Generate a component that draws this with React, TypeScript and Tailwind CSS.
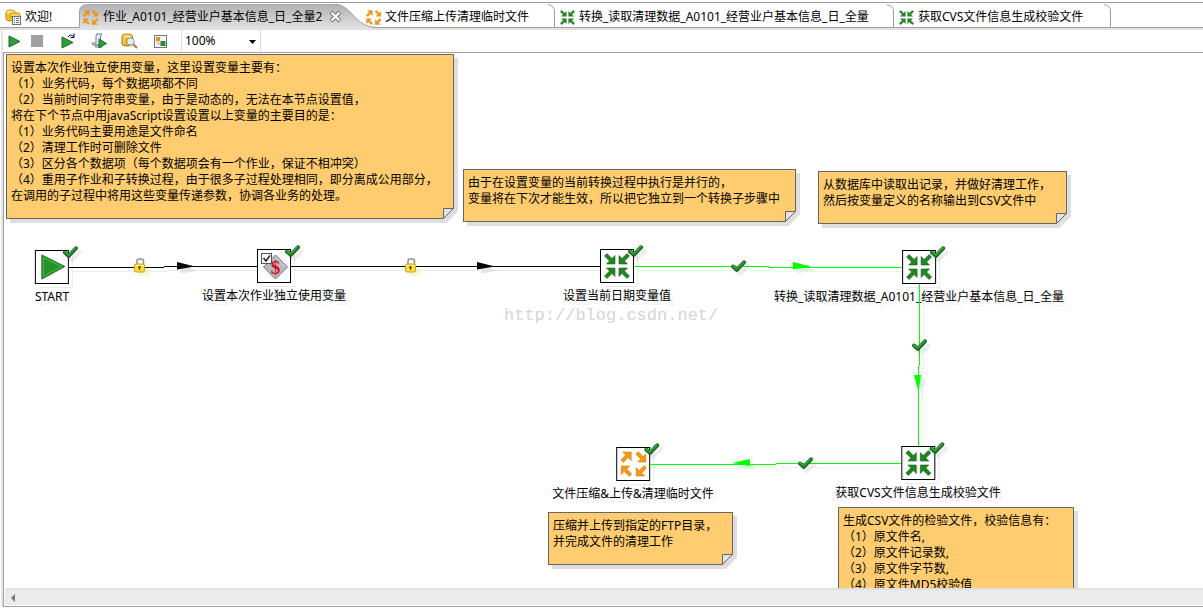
import React from 'react';

const ARROW = '0.5,3 3,0.5 8,5.5 11,2.5 11,11 2.5,11 5.5,8';

function TransformIcon({ className }: { className: string }) {
  return (
    <svg viewBox="0 0 26 26" className={className} fill="#238423" stroke="#176617" strokeWidth="0.6" aria-hidden="true">
      <polygon points={ARROW} />
      <polygon points={ARROW} transform="translate(26 0) scale(-1 1)" />
      <polygon points={ARROW} transform="translate(0 26) scale(1 -1)" />
      <polygon points={ARROW} transform="translate(26 26) scale(-1 -1)" />
    </svg>
  );
}

function JobIcon({ className }: { className: string }) {
  return (
    <svg viewBox="0 0 26 26" className={className} fill="#f29a17" stroke="#cf7d10" strokeWidth="0.6" aria-hidden="true">
      <polygon points={ARROW} transform="translate(0 0) rotate(-90 6 6)" />
      <polygon points={ARROW} transform="translate(15 0)" />
      <polygon points={ARROW} transform="translate(15 14) rotate(90 6 6)" />
      <polygon points={ARROW} transform="translate(0 14) rotate(180 6 6)" />
    </svg>
  );
}

function CheckShape() {
  return (
    <>
      <path d="M4 10 L8.500 14 L18 5.500" fill="none" stroke="#000" strokeOpacity="0.07" strokeWidth="4" />
      <path d="M2 6.500 L5.800 9.800 L13 2.300" fill="none" stroke="#165c1f" strokeWidth="4" strokeLinecap="round" strokeLinejoin="round" />
      <path d="M2 6.200 L5.800 9.200 L13 2" fill="none" stroke="#258a30" strokeWidth="2.600" strokeLinecap="round" strokeLinejoin="round" />
      <path d="M1.800 5.500 L5.600 8.300 L12.800 1.300" fill="none" stroke="#5cb462" strokeWidth="0.8" />
    </>
  );
}

function LockShape() {
  return (
    <>
      <path d="M3 7 V3 Q3 1 5 1 H7.500 Q9.500 1 9.500 3 V7" fill="none" stroke="#8f8f8f" strokeWidth="1.500" />
      <rect x="4" y="10" width="12" height="8" rx="1.500" fill="#f7ecb0" opacity="0.45" />
      <rect x="0.500" y="6" width="10" height="8" rx="1.500" fill="#f9dc35" stroke="#c9a21c" />
      <path d="M2 7.500 H10" stroke="#fff3a0" />
      <circle cx="5.500" cy="9.200" r="1.200" fill="#5a4708" />
      <path d="M5.500 9.500 V12" stroke="#5a4708" />
    </>
  );
}

function StartIcon() {
  return (
    <svg viewBox="0 0 32 32" className="size-8" aria-hidden="true">
      <path d="M6 4 L29 15.500 L6 28 Z" fill="#259425" stroke="#16701b" />
      <path d="M7.500 6.500 L26 15.500 L7.500 25.500 Z" fill="none" stroke="#63bb5e" strokeWidth="0.8" />
    </svg>
  );
}

function VariablesIcon() {
  return (
    <svg viewBox="0 0 32 32" className="size-8" aria-hidden="true">
      <path d="M17.500 5 L29.500 17 L17.500 29 L5.500 17 Z" fill="#b9babd" stroke="#6d6e70" />
      <path d="M17.500 7 L27.500 17" stroke="#dedfe0" />
      <text x="17.500" y="23.500" textAnchor="middle" fontFamily="Liberation Serif, serif" fontWeight="700" fontSize="19" fill="#cf1020">$</text>
      <rect x="3.500" y="3.500" width="10" height="10" fill="#f6f6f6" stroke="#555" />
      <path d="M5.500 8 L8 11 L12 5.500" fill="none" stroke="#222" strokeWidth="1.500" />
    </svg>
  );
}

function Node({ place, label, children }: { place: string; label: string; children: React.ReactNode }) {
  return (
    <div className={`absolute flex -translate-x-1/2 flex-col items-center gap-[5px] ${place}`}>
      <div className="relative flex size-[34px] items-center justify-center border border-black bg-white shadow-[3px_3px_0_0_#fff,4px_4px_0_0_#ebebeb]">
        {children}
        <svg viewBox="0 0 20 16" className="absolute -top-[5px] left-[27px] h-4 w-5" aria-hidden="true">
          <CheckShape />
        </svg>
      </div>
      <span className="whitespace-nowrap leading-4 [text-shadow:4px_4px_0_#f3f3f3]">{label}</span>
    </div>
  );
}

function Note({ place, lines }: { place: string; lines: string[] }) {
  return (
    <div className={`absolute border border-[#666] bg-[#ffcc70] pt-[5px] pr-1 pb-[14px] pl-1 shadow-[4px_4px_0_#dedede] ${place}`}>
      {lines.map((line) => (
        <p key={line} className="whitespace-nowrap leading-4">{line}</p>
      ))}
      <svg viewBox="0 0 17 17" className="absolute -right-[6px] -bottom-[6px] size-[17px]" aria-hidden="true">
        <path d="M1 12 L12 1 H17 V17 H1 Z" fill="#fff" />
        <path d="M1 12 L12 1 H16 V4.500 L4.500 16 H1 Z" fill="#dedede" />
        <path d="M1.500 11.500 V1.500 H11.500 Z" fill="#e2e2e2" stroke="#666" />
      </svg>
    </div>
  );
}

const BLACK_HOPS = 'M69 267.500 H164 M164 266.500 H257 M291 266.500 H600';
const GREEN_HOPS = 'M634 266.500 H769 M769 267.500 H902 M919.500 284 V366 M918.500 366 V446 M901 463.500 H776 M776 464.500 H650';
const BLACK_HEADS = 'M177 262 L195 266.500 L177 269.500 Z M477 262 L495 266.500 L477 269.500 Z';
const GREEN_HEADS = 'M793 262 L811 266.500 L793 269.500 Z M914 375 H921 L918.500 392 Z M750 459 V466 L732 463 Z';

function HopShadows() {
  return (
    <svg className="absolute inset-0 size-full" aria-hidden="true">
      <g transform="translate(0 -49)" fill="none">
        <path d={BLACK_HOPS} stroke="#ededed" />
        <path d={GREEN_HOPS} stroke="#e6fae6" />
        <path d={BLACK_HEADS} fill="#e4e4e4" />
        <path d={GREEN_HEADS} fill="#dcf8dc" />
      </g>
    </svg>
  );
}

function Hops() {
  return (
    <svg className="pointer-events-none absolute inset-0 size-full" aria-hidden="true">
      <g transform="translate(-4 -53)" fill="none">
        <path d={BLACK_HOPS} stroke="#000" shapeRendering="crispEdges" />
        <path d={BLACK_HEADS} fill="#000" />
        <path d={GREEN_HOPS} stroke="#0f0" shapeRendering="crispEdges" />
        <path d={GREEN_HEADS} fill="#0f0" />
        <g transform="translate(134 258)"><LockShape /></g>
        <g transform="translate(405 258)"><LockShape /></g>
        <g transform="translate(731 260)"><CheckShape /></g>
        <g transform="translate(912 339)"><CheckShape /></g>
        <g transform="translate(798 457)"><CheckShape /></g>
      </g>
    </svg>
  );
}

function DatabaseIcon() {
  return (
    <svg viewBox="0 0 17 16" className="h-4 w-[17px] shrink-0" aria-hidden="true">
      <path d="M1 3 Q1 1 5.500 1 Q10 1 10 3 V10 Q10 12 5.500 12 Q1 12 1 10 Z" fill="#f4c02c" stroke="#c98a12" />
      <ellipse cx="5.500" cy="3.200" rx="4" ry="1.600" fill="#fde58a" />
      <path d="M5 5 Q5 4 9 4 H13 Q15 4 15 6 V8 H5 Z" fill="#f8d45a" stroke="#c98a12" />
      <rect x="7.500" y="7.500" width="8" height="8" fill="#f4f4f4" stroke="#6b7078" />
      <path d="M9 9.500 H10 M11 9.500 H14 M9 11.500 H10 M11 11.500 H14 M9 13.500 H10 M11 13.500 H14" stroke="#6b7078" />
    </svg>
  );
}

function TabEdge() {
  return (
    <svg viewBox="0 0 7 24" className="absolute top-px right-0 h-6 w-[7px]" fill="none" stroke="#a0a0a4" aria-hidden="true">
      <path d="M0 0.500 Q6.500 2 6.500 7 V24" />
    </svg>
  );
}

function Tab({ width, icon, label }: { width: string; icon: React.ReactNode; label: string }) {
  return (
    <button type="button" role="tab" aria-selected="false" className={`relative flex h-full shrink-0 items-center gap-1 border-b border-[#a0a0a4] bg-white pt-1 whitespace-nowrap ${width}`}>
      {icon}
      <span>{label}</span>
      <TabEdge />
    </button>
  );
}

function TabBar() {
  return (
    <div role="tablist" className="flex h-[26px] shrink-0 border-t border-[#a0a0a4] bg-white">
      <button type="button" role="tab" aria-selected="false" className="flex w-[79px] shrink-0 items-center gap-[3px] border-b border-[#a0a0a4] pt-1 pl-[5px]">
        <DatabaseIcon />
        <span>欢迎!</span>
      </button>
      <div className="relative z-10 flex w-[282px] shrink-0">
        <div className="mt-px flex w-[254px] items-center rounded-tl-lg border-l border-[#a0a0a4] bg-linear-to-b from-[#b0b0b2] to-[#e1e1e1] pt-[2px] pl-[3px]">
          <button type="button" role="tab" aria-selected="true" className="flex items-center gap-[5px] whitespace-nowrap">
            <JobIcon className="size-[15px] shrink-0" />
            <span>作业_A0101_经营业户基本信息_日_全量2</span>
          </button>
        </div>
        <svg viewBox="0 0 44 24" className="absolute top-px left-[253px] h-6 w-11" aria-hidden="true">
          <defs>
            <linearGradient id="activeTab" x1="0" y1="0" x2="0" y2="1">
              <stop offset="0" stopColor="#b0b0b2" />
              <stop offset="1" stopColor="#e1e1e1" />
            </linearGradient>
          </defs>
          <path d="M0 0 C22 0 20 22 44 24 H0 Z" fill="url(#activeTab)" />
          <path d="M0 0 C22 0 20 22 44 23.500" fill="none" stroke="#a0a0a4" />
        </svg>
        <button type="button" aria-label="关闭" className="absolute top-[7px] left-[250px] size-[13px]">
          <svg viewBox="0 0 13 13" className="size-[13px]" fill="none" aria-hidden="true">
            <path d="M2 2 L11 11 M11 2 L2 11" stroke="#707070" strokeWidth="4.200" />
            <path d="M2.500 2.500 L10.500 10.500 M10.500 2.500 L2.500 10.500" stroke="#fff" strokeWidth="2.400" />
          </svg>
        </button>
      </div>
      <Tab width="w-[194px] pl-[5px]" icon={<JobIcon className="size-[15px] shrink-0" />} label="文件压缩上传清理临时文件" />
      <Tab width="w-[339px] pl-[5px]" icon={<TransformIcon className="size-[15px] shrink-0" />} label="转换_读取清理数据_A0101_经营业户基本信息_日_全量" />
      <Tab width="w-[217px] pl-[5px]" icon={<TransformIcon className="size-[15px] shrink-0" />} label="获取CVS文件信息生成校验文件" />
      <div className="flex-1 border-b border-[#a0a0a4]" />
    </div>
  );
}

const PLAY = 'M1 1 L12 6.500 L1 12 Z';

function Toolbar() {
  return (
    <div role="toolbar" className="ml-[3px] flex h-[23px] shrink-0 items-center border-b border-[#a0a0a4] bg-white">
      <div className="flex w-[178px] items-center">
        <button type="button" aria-label="运行" className="ml-[5px]">
          <svg viewBox="0 0 13 13" className="size-[13px]"><path d={PLAY} fill="#2d9e36" stroke="#176e22" /></svg>
        </button>
        <button type="button" aria-label="停止" className="ml-[10px]">
          <svg viewBox="0 0 12 12" className="size-3"><rect width="12" height="12" fill="#a0a0a0" /></svg>
        </button>
        <button type="button" aria-label="重放" className="ml-[18px]">
          <svg viewBox="0 0 15 17" className="h-[17px] w-[15px]">
            <path d="M1 4 L12 9.500 L1 15 Z" fill="#2d9e36" stroke="#176e22" />
            <path d="M7 4 Q9 0.500 12.500 3.500 M13 0.500 V4.500 H9.500" fill="none" stroke="#000" />
          </svg>
        </button>
        <button type="button" aria-label="生成SQL" className="ml-[15px]">
          <svg viewBox="0 0 17 16" className="h-4 w-[17px]">
            <path d="M5.500 1 H11 Q9.500 2 9.500 4 V12 H3 Q1 12 1 10 H5 V3 Q5 1 7 1" fill="#e6edf6" stroke="#6c7f99" />
            <path d="M3 12 H9 Q11 12 11 14 H4" fill="#c4d0e0" stroke="#6c7f99" />
            <path d="M8 6 L15.500 10.500 L8 15 Z" fill="#2d9e36" stroke="#176e22" />
          </svg>
        </button>
        <button type="button" aria-label="浏览数据库" className="ml-[13px]">
          <svg viewBox="0 0 18 16" className="h-4 w-[18px]">
            <path d="M1 3 Q1 1 6 1 Q11.500 1 11.500 3 V11 Q11.500 13 6 13 Q1 13 1 11 Z" fill="#f0b91f" stroke="#a87b10" />
            <ellipse cx="6.200" cy="3.200" rx="4.500" ry="1.500" fill="#fbe27c" />
            <path d="M2.500 5 V11" stroke="#fbe27c" />
            <path d="M12 11 L16 15" stroke="#b5792a" strokeWidth="2" />
            <circle cx="9.500" cy="8.500" r="3.700" fill="#e6eef5" stroke="#8b929a" />
          </svg>
        </button>
        <button type="button" aria-label="显示结果" className="ml-[15px]">
          <svg viewBox="0 0 13 13" className="size-[13px]">
            <rect x="0.500" y="0.500" width="12" height="12" fill="#f4f4f4" stroke="#777" />
            <rect x="2" y="2" width="4" height="4" fill="#e5941c" />
            <path d="M4 6 V9 H7" fill="none" stroke="#aaa" />
            <rect x="6.500" y="6" width="5" height="5" fill="#2d8f32" />
          </svg>
        </button>
      </div>
      <div className="relative flex h-full w-20 items-center border-x border-[#dcdce2]">
        <select aria-label="缩放" defaultValue="100" className="w-full appearance-none bg-transparent pl-[3px] outline-none">
          <option value="100">100%</option>
        </select>
        <svg viewBox="0 0 7 4" className="pointer-events-none absolute top-[10px] right-1 h-1 w-[7px]" aria-hidden="true">
          <path d="M0 0 H7 L3.500 4 Z" fill="#000" />
        </svg>
      </div>
    </div>
  );
}

const mainNote = [
  '设置本次作业独立使用变量，这里设置变量主要有：',
  '（1）业务代码，每个数据项都不同',
  '（2）当前时间字符串变量，由于是动态的，无法在本节点设置值，',
  '将在下个节点中用javaScript设置设置以上变量的主要目的是：',
  '（1）业务代码主要用途是文件命名',
  '（2）清理工作时可删除文件',
  '（3）区分各个数据项（每个数据项会有一个作业，保证不相冲突）',
  '（4）重用子作业和子转换过程，由于很多子过程处理相同，即分离成公用部分，',
  '在调用的子过程中将用这些变量传递参数，协调各业务的处理。',
];

export default function App() {
  return (
    <div lang="zh-CN" className="flex h-screen flex-col bg-white pt-[2px] pb-[2px] font-['Noto_Sans','Noto_Sans_CJK_SC',sans-serif] text-[12px] leading-4 text-black">
      <TabBar />
      <div className="h-[2px] shrink-0 bg-[#e1e1e1]" />
      <div className="ml-px flex min-h-0 flex-1 flex-col border-l-2 border-[#e5e5e5]">
        <div className="-ml-[3px] flex flex-col">
          <Toolbar />
        </div>
        <main className="relative min-h-0 flex-1 overflow-hidden border-l border-[#a0a0a4]">
          <HopShadows />
          <Note place="left-[2px] top-px w-[448px]" lines={mainNote} />
          <Note place="left-[459px] top-[116px] w-[333px]" lines={['由于在设置变量的当前转换过程中执行是并行的，', '变量将在下次才能生效，所以把它独立到一个转换子步骤中']} />
          <Note place="left-[814px] top-[118px] w-[249px]" lines={['从数据库中读取出记录，并做好清理工作，', '然后按变量定义的名称输出到CSV文件中']} />
          <Note place="left-[544px] top-[459px] w-[185px]" lines={['压缩并上传到指定的FTP目录，', '并完成文件的清理工作']} />
          <Note place="left-[834px] top-[454px] w-[236px]" lines={['生成CSV文件的检验文件，校验信息有：', '（1）原文件名,', '（2）原文件记录数,', '（3）原文件字节数,', '（4）原文件MD5校验值']} />
          <Node place="left-[48px] top-[197px]" label="START"><StartIcon /></Node>
          <Node place="left-[270px] top-[196px]" label="设置本次作业独立使用变量"><VariablesIcon /></Node>
          <Node place="left-[613px] top-[196px]" label="设置当前日期变量值"><TransformIcon className="size-[26px]" /></Node>
          <Node place="left-[915px] top-[197px]" label="转换_读取清理数据_A0101_经营业户基本信息_日_全量"><TransformIcon className="size-[26px]" /></Node>
          <Node place="left-[914px] top-[393px]" label="获取CVS文件信息生成校验文件"><TransformIcon className="size-[26px]" /></Node>
          <Node place="left-[629px] top-[394px]" label="文件压缩&上传&清理临时文件"><JobIcon className="size-[26px]" /></Node>
          <Hops />
          <span className="absolute top-[251px] left-[500px] font-['Liberation_Mono',monospace] text-[17px] leading-6 text-[#d6d6d2]">http://blog.csdn.net/</span>
        </main>
        <div className="flex h-[19px] shrink-0 border-b border-l border-[#a0a0a4] pb-px">
          <div className="ml-px flex flex-1 items-center border-t-2 border-[#e0e0e0] bg-[#ebebeb]">
            <button type="button" aria-label="向左滚动" className="ml-[6px]">
              <svg viewBox="0 0 4 8" className="h-2 w-1"><path d="M4 0 V8 L0 4 Z" fill="#777" /></svg>
            </button>
          </div>
        </div>
      </div>
    </div>
  );
}
